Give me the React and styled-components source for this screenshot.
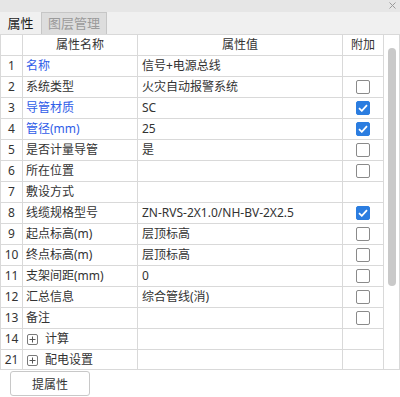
import React from "react";
import styled, { createGlobalStyle } from "styled-components";

const GlobalStyle = createGlobalStyle`
  html, body {
    margin: 0;
    padding: 0;
    background: #ffffff;
  }
  * {
    box-sizing: border-box;
  }
`;

const Window = styled.div`
  width: 400px;
  height: 397px;
  background: #ffffff;
  font-family: "Noto Sans", "Noto Sans CJK SC", sans-serif;
  font-size: 12px;
  color: #333333;
  display: flex;
  flex-direction: column;
  overflow: hidden;
`;

const TitleBar = styled.div`
  height: 12px;
  background: #e6e6e6;
  display: flex;
  justify-content: flex-end;
  align-items: flex-start;
  padding: 2px 4px 0 0;
`;

const TabBar = styled.div`
  height: 22px;
  background: #f0f0f0;
  display: flex;
`;

const Tab = styled.div`
  height: 22px;
  display: flex;
  align-items: center;
  justify-content: center;
  line-height: 1;
  font-size: 13px;
  color: ${({ $active }) => ($active ? "#1e1e1e" : "#9a9a9a")};
  background: ${({ $active }) => ($active ? "#f0f0f0" : "#dddddd")};
  border-top: ${({ $active }) => ($active ? "0" : "1px solid #c6c6c6")};
  border-right: 1px solid #c6c6c6;
  width: ${({ $w }) => $w}px;
`;

const Panel = styled.div`
  height: 336px;
  border: 1px solid #d9d9d9;
  display: flex;
  overflow: hidden;
  flex-shrink: 0;
`;

const Grid = styled.div`
  width: 383px;
  display: flex;
  flex-direction: column;
`;

const Row = styled.div`
  display: grid;
  grid-template-columns: 22px 115px 205px 41px;
  height: 21px;
  flex-shrink: 0;
`;

const Cell = styled.div`
  border-right: 1px solid #d9d9d9;
  border-bottom: 1px solid #d9d9d9;
  display: flex;
  align-items: center;
  justify-content: ${({ $align }) => $align || "flex-start"};
  padding: ${({ $pad }) => $pad || "0"};
  white-space: nowrap;
  overflow: hidden;
  color: ${({ $blue }) => ($blue ? "#2f5de8" : "#333333")};
  line-height: 1;
`;

const Track = styled.div`
  width: 15px;
  padding: 13px 0 0 4px;
`;

const Thumb = styled.div`
  width: 8px;
  height: 238px;
  background: #c9c9c9;
  border-radius: 4px;
`;

const Box = styled.span`
  width: 14px;
  height: 14px;
  border-radius: 2px;
  border: 1px solid ${({ $on }) => ($on ? "#2b7de0" : "#8a8a8a")};
  background: ${({ $on }) => ($on ? "#2b7de0" : "#ffffff")};
  display: flex;
  align-items: center;
  justify-content: center;
`;

const Expander = styled.span`
  width: 11px;
  height: 11px;
  border: 1px solid #7a7a7a;
  border-radius: 2px;
  display: flex;
  align-items: center;
  justify-content: center;
  margin: 0 7px 0 1px;
`;

const Footer = styled.div`
  padding: 1px 0 0 10px;
`;

const Button = styled.button`
  width: 80px;
  height: 25px;
  border: 1px solid #c8c8c8;
  border-radius: 3px;
  background: #ffffff;
  font-family: inherit;
  font-size: 12px;
  color: #333333;
  padding: 0;
`;

const Close = () => (
  <svg width="7" height="7" viewBox="0 0 7 7">
    <path d="M0.5 0.5 L6.5 6.5 M6.5 0.5 L0.5 6.5" stroke="#9a9a9a" strokeWidth="1" />
  </svg>
);

const Check = ({ on }) => (
  <Box $on={on}>
    {on && (
      <svg width="10" height="8" viewBox="0 0 10 8">
        <path d="M1 4.2 L3.8 6.8 L9 1.2" fill="none" stroke="#ffffff" strokeWidth="1.8" />
      </svg>
    )}
  </Box>
);

const Plus = () => (
  <Expander>
    <svg width="7" height="7" viewBox="0 0 7 7">
      <path d="M3.5 0.5 V6.5 M0.5 3.5 H6.5" stroke="#555555" strokeWidth="1" />
    </svg>
  </Expander>
);

const rows = [
  { n: 1, name: "名称", value: "信号+电源总线", blue: true },
  { n: 2, name: "系统类型", value: "火灾自动报警系统", box: false },
  { n: 3, name: "导管材质", value: "SC", blue: true, box: true },
  { n: 4, name: "管径(mm)", value: "25", blue: true, box: true },
  { n: 5, name: "是否计量导管", value: "是", box: false },
  { n: 6, name: "所在位置", value: "", box: false },
  { n: 7, name: "敷设方式", value: "" },
  { n: 8, name: "线缆规格型号", value: "ZN-RVS-2X1.0/NH-BV-2X2.5", box: true },
  { n: 9, name: "起点标高(m)", value: "层顶标高", box: false },
  { n: 10, name: "终点标高(m)", value: "层顶标高", box: false },
  { n: 11, name: "支架间距(mm)", value: "0", box: false },
  { n: 12, name: "汇总信息", value: "综合管线(消)", box: false },
  { n: 13, name: "备注", value: "", box: false },
  { n: 14, name: "计算", value: "", group: true },
  { n: 21, name: "配电设置", value: "", group: true },
];

export default function App() {
  return (
    <>
      <GlobalStyle />
      <Window>
        <TitleBar>
          <Close />
        </TitleBar>
        <TabBar>
          <Tab $active $w={42}>属性</Tab>
          <Tab $w={65}>图层管理</Tab>
        </TabBar>
        <Panel>
          <Grid>
            <Row>
              <Cell />
              <Cell $align="center">属性名称</Cell>
              <Cell $align="center">属性值</Cell>
              <Cell $align="center">附加</Cell>
            </Row>
            {rows.map((r) => (
              <Row key={r.n}>
                <Cell $align="center">{r.n}</Cell>
                <Cell $pad="0 0 0 3px" $blue={r.blue}>
                  {r.group && <Plus />}
                  {r.name}
                </Cell>
                <Cell $pad="0 0 0 4px">{r.value}</Cell>
                <Cell $align="center">
                  {r.box !== undefined && <Check on={r.box} />}
                </Cell>
              </Row>
            ))}
          </Grid>
          <Track>
            <Thumb />
          </Track>
        </Panel>
        <Footer>
          <Button>提属性</Button>
        </Footer>
      </Window>
    </>
  );
}
